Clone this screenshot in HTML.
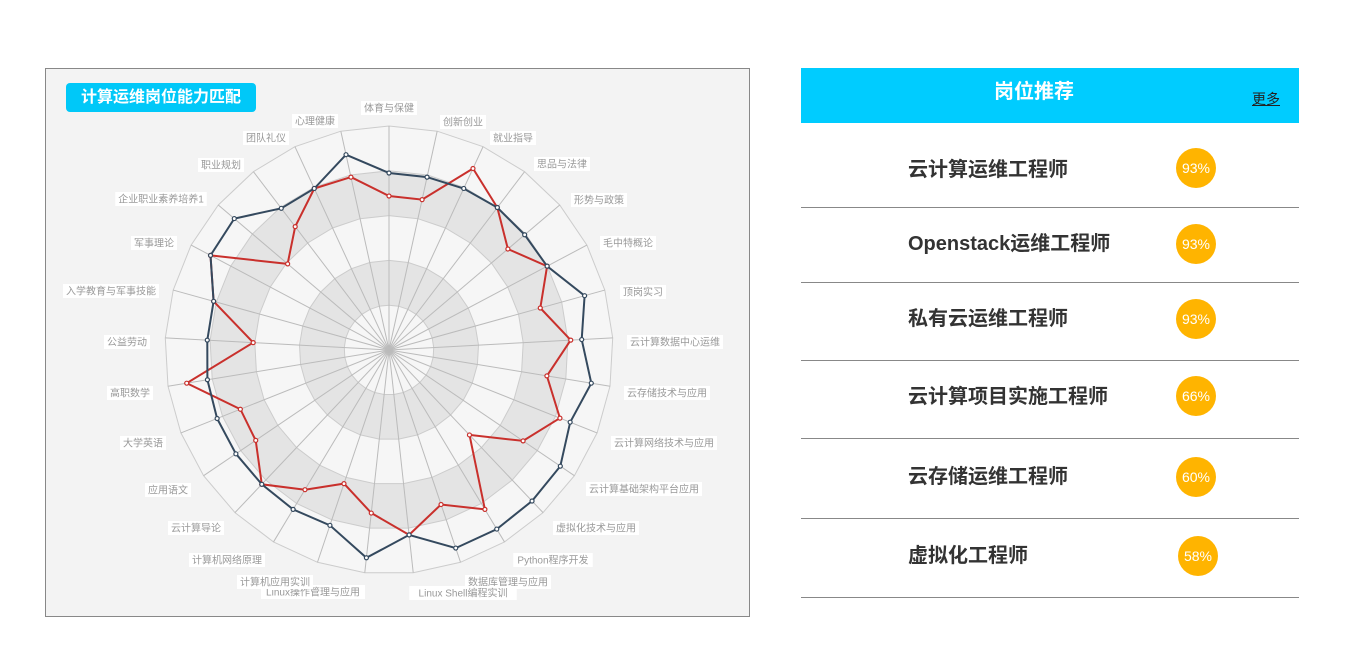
<!DOCTYPE html>
<html><head><meta charset="utf-8">
<style>
body{margin:0;width:1348px;height:663px;background:#fff;font-family:"Liberation Sans","Noto Sans CJK SC",sans-serif;position:relative;overflow:hidden}
#chart{position:absolute;left:45px;top:68px;width:703px;height:547px;border:1px solid #888;background:#f3f3f3}
#ttl{position:absolute;left:66px;top:83px;width:190px;height:29px;background:#00c8f8;border-radius:4px;color:#fff;font-weight:bold;font-size:16px;line-height:29px;text-align:center}
#hd{position:absolute;left:801px;top:68px;width:498px;height:55px;background:#00ccff}
#hd .t{position:absolute;left:0;width:466px;text-align:center;top:7px;color:#fff;font-weight:bold;font-size:20px}
#hd .m{position:absolute;left:451px;top:21px;font-size:14px;color:#222;text-decoration:underline}
.row{position:absolute;left:801px;width:498px;border-bottom:1px solid #888}
.row .n{position:absolute;left:107px;font-size:20px;font-weight:bold;color:#333;line-height:24px}
.row .b{position:absolute;width:40px;height:40px;border-radius:50%;background:#ffb400;color:#fff;font-size:14px;line-height:40px;text-align:center}
</style></head><body>
<div id="chart"></div>
<svg id="svg" width="1348" height="663" style="position:absolute;left:0;top:0"></svg>
<div id="ttl">计算运维岗位能力匹配</div>
<div id="hd"><div class="t">岗位推荐</div><div class="m">更多</div></div>
<div class="row" style="top:123px;height:84px"><div class="n" style="top:35px">云计算运维工程师</div><div class="b" style="left:375px;top:25px">93%</div></div>
<div class="row" style="top:208px;height:74px"><div class="n" style="top:24px">Openstack运维工程师</div><div class="b" style="left:375px;top:16px">93%</div></div>
<div class="row" style="top:283px;height:77px"><div class="n" style="top:24px">私有云运维工程师</div><div class="b" style="left:375px;top:16px">93%</div></div>
<div class="row" style="top:361px;height:77px"><div class="n" style="top:24px">云计算项目实施工程师</div><div class="b" style="left:375px;top:15px">66%</div></div>
<div class="row" style="top:439px;height:79px"><div class="n" style="top:26px">云存储运维工程师</div><div class="b" style="left:375px;top:18px">60%</div></div>
<div class="row" style="top:519px;height:78px"><div class="n" style="top:25px">虚拟化工程师</div><div class="b" style="left:377px;top:17px">58%</div></div>
<script>
var cx=389,cy=350,R=224,N=29,s=document.getElementById('svg'),h='';
function P(i,r){var a=i*2*Math.PI/N;return [cx+r*Math.sin(a),cy-r*Math.cos(a)];}
function poly(r){var p=[];for(var i=0;i<N;i++){var q=P(i,r);p.push(q[0].toFixed(1)+','+q[1].toFixed(1));}return p.join(' ');}
var fills=['#f6f6f6','#e4e4e4','#f6f6f6','#e4e4e4','#f6f6f6'];
for(var k=5;k>=1;k--){h+='<polygon points="'+poly(R*k/5)+'" fill="'+fills[k-1]+'" stroke="#ccc" stroke-width="1"/>';}
for(var i=0;i<N;i++){var q=P(i,R);h+='<line x1="'+cx+'" y1="'+cy+'" x2="'+q[0]+'" y2="'+q[1]+'" stroke="#bbb" stroke-width="1"/>';}
var blue=[177,177,178,179,178,179,203,193,205,195,207,208,209,209,186,209,185,186,185,185,185,184,182,182,202,203,178,178,200];
var red=[154,154,200,179,156,179,157,182,160,184,162,117,186,163,186,164,141,163,185,161,160,205,136,182,202,133,155,178,177];
function ser(v,c){var p=[],d='';for(var i=0;i<N;i++){var q=P(i,v[i]);p.push(q[0].toFixed(1)+','+q[1].toFixed(1));d+='<circle cx="'+q[0]+'" cy="'+q[1]+'" r="2" fill="#fff" stroke="'+c+'" stroke-width="1.2"/>';}
return '<polygon points="'+p.join(' ')+'" fill="none" stroke="'+c+'" stroke-width="2"/>'+d;}
h+=ser(red,'#c9302c')+ser(blue,'#34495e');
var L=[["体育与保健",389,108],["创新创业",463,122],["就业指导",513,138],["思品与法律",562,164],["形势与政策",599,200],["毛中特概论",628,243],["顶岗实习",643,292],["云计算数据中心运维",675,342],["云存储技术与应用",667,393],["云计算网络技术与应用",664,443],["云计算基础架构平台应用",644,489],["虚拟化技术与应用",596,528],["Python程序开发",553,560],["数据库管理与应用",508,582],["Linux Shell编程实训",463,593],["Linux操作管理与应用",313,592],["计算机应用实训",275,582],["计算机网络原理",227,560],["云计算导论",196,528],["应用语文",168,490],["大学英语",143,443],["高职数学",130,393],["公益劳动",127,342],["入学教育与军事技能",111,291],["军事理论",154,243],["企业职业素养培养1",161,199],["职业规划",221,165],["团队礼仪",266,138],["心理健康",315,121]];
L.forEach(function(l){var w=0;for(var j=0;j<l[0].length;j++){w+=l[0].charCodeAt(j)>255?10:5.6;}
h+='<rect x="'+(l[1]-w/2-3)+'" y="'+(l[2]-7)+'" width="'+(w+6)+'" height="14" fill="#fff"/><text x="'+l[1]+'" y="'+(l[2]+3.5)+'" font-size="10" fill="#999" text-anchor="middle" font-family="Liberation Sans, Noto Sans CJK SC, sans-serif">'+l[0]+'</text>';});
s.innerHTML=h;
</script>
</body></html>
